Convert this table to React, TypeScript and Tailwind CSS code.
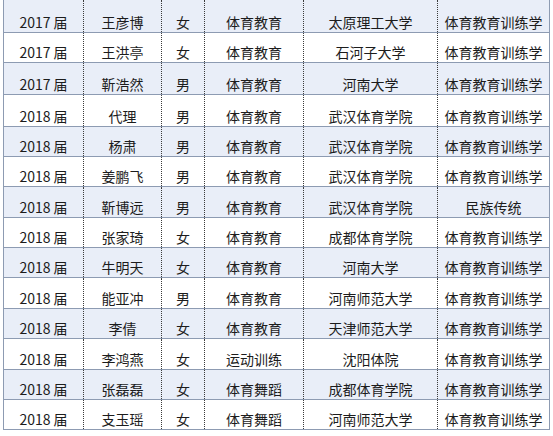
import React from 'react';

type Row = [string, string, string, string, string, string];

const rows: Row[] = [
  ['2017 届', '王彦博', '女', '体育教育', '太原理工大学', '体育教育训练学'],
  ['2017 届', '王洪亭', '女', '体育教育', '石河子大学', '体育教育训练学'],
  ['2017 届', '靳浩然', '男', '体育教育', '河南大学', '体育教育训练学'],
  ['2018 届', '代理', '男', '体育教育', '武汉体育学院', '体育教育训练学'],
  ['2018 届', '杨肃', '男', '体育教育', '武汉体育学院', '体育教育训练学'],
  ['2018 届', '姜鹏飞', '男', '体育教育', '武汉体育学院', '体育教育训练学'],
  ['2018 届', '靳博远', '男', '体育教育', '武汉体育学院', '民族传统'],
  ['2018 届', '张家琦', '女', '体育教育', '成都体育学院', '体育教育训练学'],
  ['2018 届', '牛明天', '女', '体育教育', '河南大学', '体育教育训练学'],
  ['2018 届', '能亚冲', '男', '体育教育', '河南师范大学', '体育教育训练学'],
  ['2018 届', '李倩', '女', '体育教育', '天津师范大学', '体育教育训练学'],
  ['2018 届', '李鸿燕', '女', '运动训练', '沈阳体院', '体育教育训练学'],
  ['2018 届', '张磊磊', '女', '体育舞蹈', '成都体育学院', '体育教育训练学'],
  ['2018 届', '支玉瑶', '女', '体育舞蹈', '河南师范大学', '体育教育训练学'],
];

// row heights measured from the screenshot
const heights = ['h-[33px]', 'h-[30px]', 'h-[32px]', 'h-[32px]', 'h-[30px]', 'h-[30px]', 'h-[31px]', 'h-[30px]', 'h-[30px]', 'h-[31px]', 'h-[30px]', 'h-[31px]', 'h-[30px]', 'h-[30px]'];

const App = () => {
  return (
    <div
      className="w-[553px] h-[436px] bg-white overflow-hidden text-[14px] leading-[14px] text-[#1c1c1c]"
      style={{ fontFamily: '"Noto Sans CJK SC", "Noto Sans", sans-serif' }}
    >
      <div className="ml-[3px] w-[547px] border-l border-r border-[#8d9bb2]">
        {rows.map((r, i) => (
          <div
            key={i}
            className={`grid grid-cols-[80px_78px_43px_99px_134px_111px] border-b border-[#8d9bb2] ${heights[i]} ${
              i % 2 === 0 ? 'bg-[#e9eef8]' : 'bg-white'
            }`}
          >
            {r.map((c, j) => (
              <div
                key={j}
                className={`flex items-end justify-center pb-[3px] whitespace-nowrap ${
                  j < 5 ? 'border-r border-dotted border-[#3a3a3a]' : ''
                }`}
              >
                {c}
              </div>
            ))}
          </div>
        ))}
      </div>
    </div>
  );
};

export default App;
